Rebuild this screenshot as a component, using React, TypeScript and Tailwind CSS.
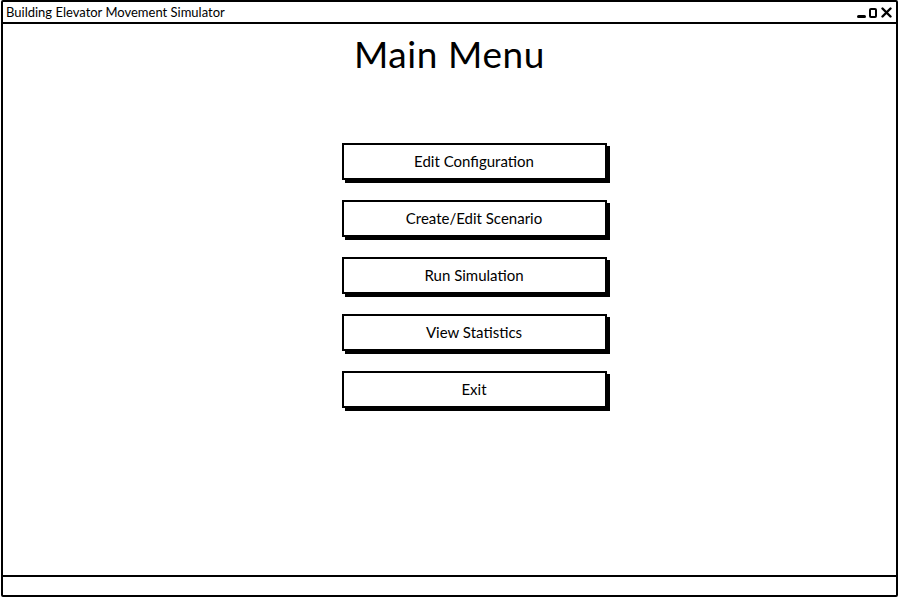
export default function App() {
  const items = [
    "Edit Configuration",
    "Create/Edit Scenario",
    "Run Simulation",
    "View Statistics",
    "Exit",
  ];

  return (
    <div className="h-[600px] w-[900px] bg-white pl-[1px] pr-[2px] pb-[3px]" style={{ fontFamily: "Lato, 'Noto Sans', sans-serif" }}>
      <div className="flex h-full flex-col rounded-[2px] border-2 border-black bg-white text-black">
        {/* title bar */}
        <div className="flex h-[22px] shrink-0 items-center justify-between border-b-2 border-black pl-[3px] pr-[4px]">
          <span className="text-[13px] leading-none">Building Elevator Movement Simulator</span>
          <div className="flex items-center gap-[3px] pt-[1px]">
            <span className="mt-[7px] block h-[3px] w-[9px] rounded-sm bg-black" />
            <span className="block h-[10px] w-[8px] rounded-[2px] border-2 border-black" />
            <svg width="11" height="11" viewBox="0 0 11 11" className="ml-[1px]">
              <path d="M1.5 1.5 L9.5 9.5 M9.5 1.5 L1.5 9.5" stroke="black" strokeWidth="2.4" strokeLinecap="round" />
            </svg>
          </div>
        </div>

        {/* content */}
        <div className="flex flex-1 flex-col items-center">
          <h1 className="mt-[8px] text-[37px] leading-[44px] tracking-[0.6px]">Main Menu</h1>
          <div className="mt-[67px] flex flex-col gap-[20px] pl-[49px]">
            {items.map((label) => (
              <button
                key={label}
                className="flex h-[37px] w-[265px] items-center justify-center border-2 border-black bg-white text-[15px] shadow-[3px_3px_0_0_#000]"
              >
                {label}
              </button>
            ))}
          </div>
        </div>

        {/* status bar */}
        <div className="h-[20px] shrink-0 border-t-2 border-black" />
      </div>
    </div>
  );
}
